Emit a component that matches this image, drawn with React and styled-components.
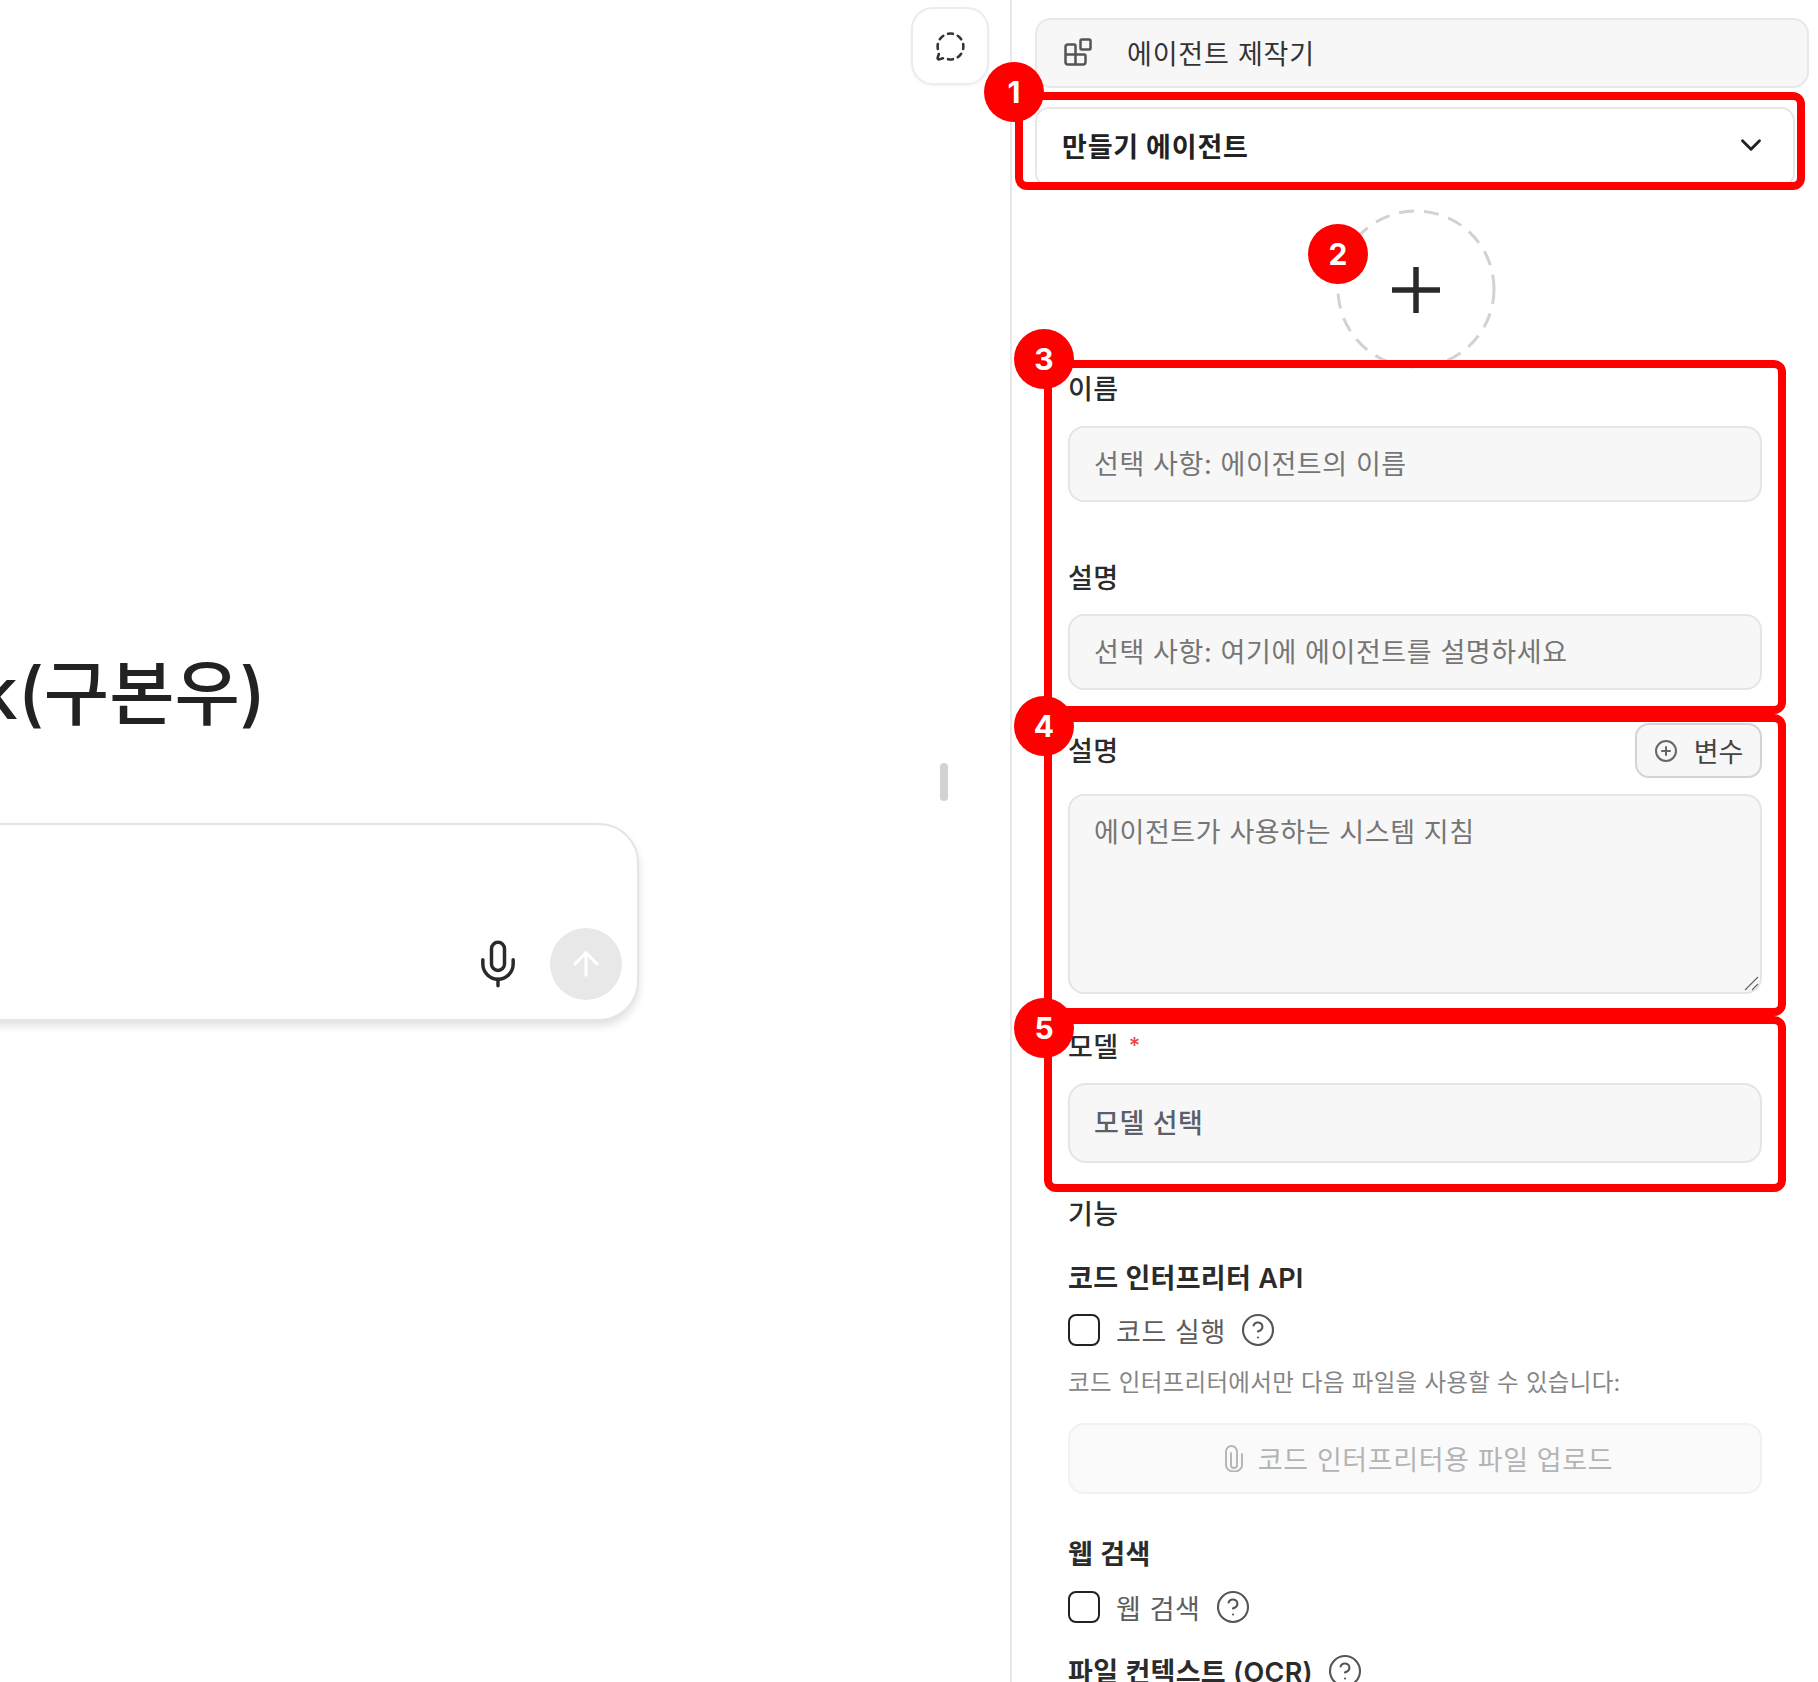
import React from 'react';
import styled, { createGlobalStyle } from 'styled-components';
import {
  ArrowUp,
  Blocks,
  ChevronDown,
  CircleHelp,
  CirclePlus,
  MessageCircleDashed,
  Mic,
} from 'lucide-react';

const GlobalStyle = createGlobalStyle`
  html, body {
    margin: 0;
    height: 1682px;
    overflow: hidden;
    background: #fff;
    font-family: Inter, "Noto Sans CJK KR", sans-serif;
    color: #222;
  }
  * { box-sizing: border-box; }
`;

const frames = [
  { x: 1015, y: 92, w: 790, h: 98 },
  { x: 1044, y: 360, w: 742, h: 354 },
  { x: 1044, y: 714, w: 742, h: 302 },
  { x: 1044, y: 1016, w: 742, h: 176 },
];

const badges = [
  { n: 1, x: 1014, y: 92 },
  { n: 2, x: 1338, y: 254 },
  { n: 3, x: 1044, y: 359 },
  { n: 4, x: 1044, y: 726 },
  { n: 5, x: 1044, y: 1028 },
];

const Help = () => (
  <HelpIcon>
    <CircleHelp size={36} strokeWidth={1.4} />
  </HelpIcon>
);

const App = () => {
  return (
    <Page>
      <GlobalStyle />
      <Main>
        <Canvas>
          <Heading>k(구본우)</Heading>
          <Composer>
            <MicButton>
              <Mic size={52} strokeWidth={1.6} />
            </MicButton>
            <SendButton>
              <ArrowUp size={38} strokeWidth={2} />
            </SendButton>
          </Composer>
        </Canvas>
        <Rail>
          <RailButton>
            <MessageCircleDashed size={31} strokeWidth={2} />
          </RailButton>
          <Handle />
        </Rail>
      </Main>

      <Sidebar>
        <BuilderBar>
          <BuilderIcon>
            <Blocks size={30} strokeWidth={2} />
          </BuilderIcon>
          에이전트 제작기
        </BuilderBar>
        <AgentSelect>
          만들기 에이전트
          <ChevronDown size={34} strokeWidth={2} />
        </AgentSelect>
        <AvatarPicker>
          <svg width="160" height="160" viewBox="0 0 160 160" fill="none">
            <circle cx="80" cy="80" r="78" stroke="#d2d2d2" strokeWidth="3" strokeDasharray="15 10" />
            <path d="M80 58v46M56 81h48" stroke="#2a2a2a" strokeWidth="5.5" />
          </svg>
        </AvatarPicker>

        <Form>
          <Label $top={2}>이름</Label>
          <TextInput $top={21} placeholder="선택 사항: 에이전트의 이름" />

          <Label $top={58}>설명</Label>
          <TextInput $top={20} placeholder="선택 사항: 여기에 에이전트를 설명하세요" />

          <LabelRow $top={33}>
            <Label>설명</Label>
            <VariableButton>
              <CirclePlus size={24} strokeWidth={2} />
              변수
            </VariableButton>
          </LabelRow>
          <TextAreaBox>
            <TextArea placeholder="에이전트가 사용하는 시스템 지침" />
            <ResizeGrip width="15" height="15" viewBox="0 0 15 15" fill="none">
              <path d="M1 14 14 1M8 14l6-6" stroke="#666" strokeWidth="1.2" />
            </ResizeGrip>
          </TextAreaBox>

          <Label $top={35}>
            모델 <Required>*</Required>
          </Label>
          <ModelSelect>모델 선택</ModelSelect>

          <Label $top={33}>기능</Label>
          <Label $top={30} $strong>
            코드 인터프리터 API
          </Label>
          <CheckRow $top={20}>
            <CheckBox type="checkbox" />
            <CheckLabel>코드 실행</CheckLabel>
            <Help />
          </CheckRow>
          <Note>코드 인터프리터에서만 다음 파일을 사용할 수 있습니다:</Note>
          <UploadButton>
            <svg width="20" height="27" viewBox="0 0 20 27" fill="none">
              <path
                d="M7 8v12a3 3 0 0 0 6 0V6.5a5.5 5.5 0 0 0-11 0v14a8 6 0 0 0 16 0V9"
                stroke="#b4b4b4"
                strokeWidth="1.9"
                strokeLinecap="round"
              />
            </svg>
            코드 인터프리터용 파일 업로드
          </UploadButton>

          <Label $top={42} $strong>
            웹 검색
          </Label>
          <CheckRow $top={21}>
            <CheckBox type="checkbox" />
            <CheckLabel>웹 검색</CheckLabel>
            <Help />
          </CheckRow>
          <LabelRow $top={30} $start>
            <Label $strong>파일 컨텍스트 (OCR)</Label>
            <Help />
          </LabelRow>
        </Form>
      </Sidebar>

      {/* 스크린샷 위에 그려진 빨간 표시 */}
      {frames.map((f) => (
        <Frame key={f.y} $x={f.x} $y={f.y} $w={f.w} $h={f.h} />
      ))}
      {badges.map((b) => (
        <Badge key={b.n} $x={b.x} $y={b.y}>
          {b.n}
        </Badge>
      ))}
    </Page>
  );
};

const Page = styled.div`
  position: relative;
  display: flex;
  width: 1818px;
  height: 1682px;
  overflow: hidden;
`;

const Main = styled.main`
  flex: 0 0 1010px;
  display: flex;
`;
const Canvas = styled.div`
  flex: 0 0 911px;
  min-width: 0;
  overflow: hidden;
  display: flex;
  flex-direction: column;
  align-items: flex-end;
  padding: 648px 272px 0 0;
`;
const Heading = styled.h1`
  margin: 0 373px 0 0;
  font-size: 71px;
  line-height: 90px;
  font-weight: 500;
  white-space: nowrap;
  color: #222;
`;
const Composer = styled.div`
  flex: 0 0 198px;
  width: 800px;
  margin-top: 85px;
  display: flex;
  align-items: flex-end;
  justify-content: flex-end;
  gap: 26px;
  padding: 0 15px 19px 0;
  background: #fff;
  border: 2px solid #e5e5e5;
  border-radius: 40px;
  box-shadow: 0 5px 8px rgba(0, 0, 0, 0.12);
`;
const MicButton = styled.div`
  display: flex;
  align-items: center;
  height: 72px;
  color: #2a2a2a;
`;
const SendButton = styled.div`
  width: 72px;
  height: 72px;
  border-radius: 50%;
  background: #e8e8e8;
  color: #fff;
  display: flex;
  align-items: center;
  justify-content: center;
`;

const Rail = styled.div`
  flex: 0 0 99px;
  padding-top: 7px;
`;
const RailButton = styled.div`
  width: 78px;
  height: 78px;
  border: 2px solid #ececec;
  border-radius: 22px;
  color: #333;
  display: flex;
  align-items: center;
  justify-content: center;
  box-shadow: 0 1px 3px rgba(0, 0, 0, 0.05);
`;
const Handle = styled.div`
  width: 8px;
  height: 38px;
  margin: 678px 0 0 29px;
  border-radius: 4px;
  background: #d2d2d2;
`;

const Sidebar = styled.aside`
  flex: 1 1 0;
  border-left: 2px solid #e8e8e8;
  padding: 18px 0 0 23px;
`;
const BuilderBar = styled.div`
  width: 774px;
  height: 70px;
  display: flex;
  align-items: center;
  padding: 0 0 2px 26px;
  background: #f7f7f7;
  border: 2px solid #e8e8e8;
  border-radius: 16px;
  font-size: 27px;
  letter-spacing: 0.8px;
  color: #333;
`;
const BuilderIcon = styled.span`
  display: flex;
  width: 64px;
  color: #555;
`;
const AgentSelect = styled.div`
  width: 760px;
  height: 80px;
  margin-top: 19px;
  display: flex;
  align-items: center;
  justify-content: space-between;
  padding: 0 25px 4px 25px;
  border: 2px solid #e8e8e8;
  border-radius: 14px;
  font-size: 27px;
  font-weight: 700;
  letter-spacing: 0.8px;
  color: #222;
`;
const AvatarPicker = styled.div`
  display: flex;
  width: 160px;
  margin: 22px 0 0 301px;
`;

const Form = styled.div`
  width: 694px;
  margin-left: 33px;
`;
const Label = styled.div`
  height: 34px;
  margin-top: ${({ $top }) => $top || 0}px;
  padding-bottom: 2px;
  display: flex;
  align-items: center;
  gap: 3px;
  font-size: 27px;
  font-weight: ${({ $strong }) => ($strong ? 600 : 500)};
  letter-spacing: 0.3px;
  color: #2b2b2b;
  white-space: pre;
`;
const Required = styled.span`
  color: #ef4444;
  font-size: 22px;
`;
const LabelRow = styled.div`
  margin-top: ${({ $top }) => $top}px;
  display: flex;
  align-items: center;
  justify-content: ${({ $start }) => ($start ? 'flex-start' : 'space-between')};
`;
const fieldText = `
  font-family: Inter, "Noto Sans CJK KR", sans-serif;
  font-size: 27px;
  letter-spacing: 0.6px;
`;
const TextInput = styled.input`
  display: block;
  width: 100%;
  height: 76px;
  margin-top: ${({ $top }) => $top}px;
  padding: 0 24px;
  background: #f7f7f7;
  border: 2px solid #e5e5e5;
  border-radius: 16px;
  outline: none;
  ${fieldText}
  &::placeholder {
    color: #757575;
    opacity: 1;
  }
`;
const TextAreaBox = styled.div`
  position: relative;
  margin-top: 16px;
`;
const TextArea = styled.textarea`
  display: block;
  width: 100%;
  height: 200px;
  padding: 20px 24px;
  background: #f7f7f7;
  border: 2px solid #e5e5e5;
  border-radius: 16px;
  outline: none;
  resize: none;
  line-height: 34px;
  ${fieldText}
  &::placeholder {
    color: #757575;
    opacity: 1;
  }
`;
const ResizeGrip = styled.svg`
  position: absolute;
  right: 3px;
  bottom: 3px;
`;
const VariableButton = styled.div`
  width: 127px;
  height: 55px;
  display: flex;
  align-items: center;
  justify-content: center;
  gap: 16px;
  background: #f7f7f7;
  border: 2px solid #d4d4d4;
  border-radius: 14px;
  font-size: 27px;
  color: #444;
  svg {
    color: #666;
  }
`;
const ModelSelect = styled.div`
  height: 80px;
  margin-top: 20px;
  display: flex;
  align-items: center;
  padding: 0 24px 3px;
  background: #f7f7f7;
  border: 2px solid #e5e5e5;
  border-radius: 18px;
  font-size: 27px;
  font-weight: 500;
  letter-spacing: 0.6px;
  color: #5b5f6b;
`;
const CheckRow = styled.div`
  height: 32px;
  margin-top: ${({ $top }) => $top}px;
  display: flex;
  align-items: center;
`;
const CheckBox = styled.input`
  appearance: none;
  width: 32px;
  height: 32px;
  margin: 0 16px 0 0;
  border: 2px solid #222;
  border-radius: 8px;
  background: #fff;
`;
const CheckLabel = styled.span`
  font-size: 27px;
  letter-spacing: 0.6px;
  color: #5d5d5d;
`;
const HelpIcon = styled.span`
  display: flex;
  margin-left: 14px;
  color: #555;
`;
const Note = styled.div`
  height: 32px;
  margin-top: 20px;
  padding-bottom: 2px;
  display: flex;
  align-items: center;
  font-size: 23.5px;
  letter-spacing: 0.3px;
  color: #858585;
`;
const UploadButton = styled.div`
  height: 71px;
  margin-top: 25px;
  padding-left: 7px;
  display: flex;
  align-items: center;
  justify-content: center;
  gap: 14px;
  background: #fafafa;
  border: 2px solid #f1f1f1;
  border-radius: 16px;
  font-size: 27px;
  letter-spacing: 0.6px;
  color: #b4b4b4;
`;

const Frame = styled.div`
  position: absolute;
  left: ${({ $x }) => $x}px;
  top: ${({ $y }) => $y}px;
  width: ${({ $w }) => $w}px;
  height: ${({ $h }) => $h}px;
  border: 8px solid #ff0000;
  border-radius: 12px;
`;
const Badge = styled.div`
  position: absolute;
  left: ${({ $x }) => $x - 30}px;
  top: ${({ $y }) => $y - 30}px;
  width: 60px;
  height: 60px;
  display: flex;
  align-items: center;
  justify-content: center;
  border-radius: 50%;
  background: #ff0000;
  color: #fff;
  font-size: 30px;
  font-weight: 700;
`;

export default App;
